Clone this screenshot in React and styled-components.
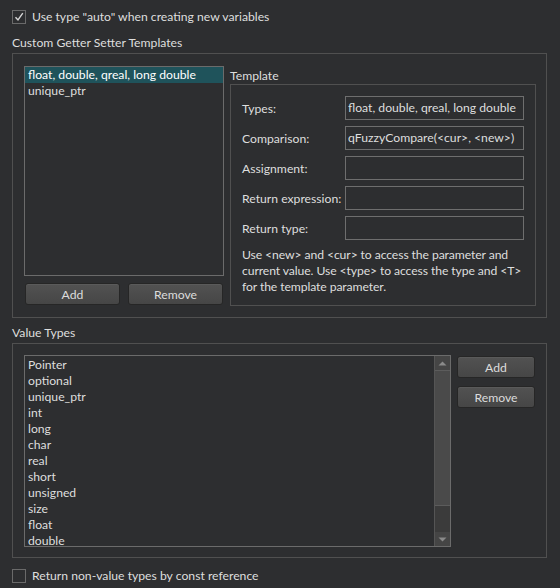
import styled, { createGlobalStyle } from "styled-components";

const GlobalStyle = createGlobalStyle`
  html, body {
    margin: 0;
    padding: 0;
    background: #2d2e30;
  }
  body {
    font-family: "Lato", "Liberation Sans", sans-serif;
    font-size: 12.2px;
    color: #dedede;
  }
`;

const templates = ["float, double, qreal, long double", "unique_ptr"];

const valueTypes = [
  "Pointer",
  "optional",
  "unique_ptr",
  "int",
  "long",
  "char",
  "real",
  "short",
  "unsigned",
  "size",
  "float",
  "double",
];

const fields = [
  { label: "Types:", value: "float, double, qreal, long double" },
  { label: "Comparison:", value: "qFuzzyCompare(<cur>, <new>)" },
  { label: "Assignment:", value: "" },
  { label: "Return expression:", value: "" },
  { label: "Return type:", value: "" },
];

const helpLines = [
  "Use <new> and <cur> to access the parameter and",
  "current value. Use <type> to access the type and <T>",
  "for the template parameter.",
];

const CheckMark = () => (
  <svg width="12" height="12" viewBox="0 0 12 12">
    <path d="M2.5 6.2 L5 9 L9.8 2.2" fill="none" stroke="#d6d6d6" strokeWidth="1.4" />
  </svg>
);

const CheckBox = ({ checked, children }) => (
  <CheckRow>
    <Box>{checked && <CheckMark />}</Box>
    <span>{children}</span>
  </CheckRow>
);

const Arrow = ({ up }) => (
  <svg width="9" height="5" viewBox="0 0 9 5">
    <path d={up ? "M0.5 4.5 L4.5 0.5 L8.5 4.5 Z" : "M0.5 0.5 L4.5 4.5 L8.5 0.5 Z"} fill="#8a8a8a" />
  </svg>
);

const App = () => {
  return (
    <Page>
      <GlobalStyle />
      <CheckBox checked>Use type "auto" when creating new variables</CheckBox>

      <SectionTitle>Custom Getter Setter Templates</SectionTitle>
      <GroupBox $padding="12px 10px 11px 11px">
        <LeftColumn>
          <TemplateList>
            {templates.map((t, i) => (
              <Item key={t} $selected={i === 0}>
                {t}
              </Item>
            ))}
          </TemplateList>
          <ButtonRow>
            <Button>Add</Button>
            <Button>Remove</Button>
          </ButtonRow>
        </LeftColumn>

        <RightColumn>
          <InnerTitle>Template</InnerTitle>
          <TemplateBox>
            {fields.map(f => (
              <FieldRow key={f.label}>
                <FieldLabel>{f.label}</FieldLabel>
                <Input>{f.value}</Input>
              </FieldRow>
            ))}
            <Help>
              {helpLines.map(line => (
                <div key={line}>{line}</div>
              ))}
            </Help>
          </TemplateBox>
        </RightColumn>
      </GroupBox>

      <SectionTitle $top={7}>Value Types</SectionTitle>
      <GroupBox $padding="11px 11px 11px 11px" $height={215}>
        <ValueList>
          <Items>
            {valueTypes.map(v => (
              <Item key={v}>{v}</Item>
            ))}
          </Items>
          <ScrollBar>
            <ScrollButton>
              <Arrow up />
            </ScrollButton>
            <Thumb />
            <Track />
            <ScrollButton>
              <Arrow />
            </ScrollButton>
          </ScrollBar>
        </ValueList>
        <SideButtons>
          <Button $width={78}>Add</Button>
          <Button $width={78}>Remove</Button>
        </SideButtons>
      </GroupBox>

      <BottomCheck>
        <CheckBox>Return non-value types by const reference</CheckBox>
      </BottomCheck>
    </Page>
  );
};

export default App;

/* ---------------------------- Styled Components --------------------------- */

const Page = styled.div`
  width: 560px;
  height: 588px;
  box-sizing: border-box;
  padding: 10px 13px 0 12px;
  display: flex;
  flex-direction: column;
`;

const CheckRow = styled.label`
  display: flex;
  align-items: center;
  gap: 6px;
  height: 14px;
  line-height: 14px;
`;

const Box = styled.span`
  width: 12px;
  height: 12px;
  border: 1px solid #6a6a6a;
  display: grid;
  place-items: center;
  flex-shrink: 0;
`;

const SectionTitle = styled.div`
  margin-top: ${props => props.$top ?? 11}px;
  height: 16px;
  line-height: 16px;
  margin-bottom: 2px;
`;

const GroupBox = styled.section`
  border: 1px solid #505050;
  box-sizing: border-box;
  height: ${props => props.$height ?? 265}px;
  padding: ${props => props.$padding};
  display: flex;
  gap: 6px;
`;

const LeftColumn = styled.div`
  width: 200px;
  display: flex;
  flex-direction: column;
`;

const ListFrame = styled.div`
  border: 1px solid #6b6b6b;
  box-sizing: border-box;
  overflow: hidden;
`;

const TemplateList = styled(ListFrame)`
  height: 210px;
`;

const Item = styled.div`
  height: 16px;
  line-height: 16px;
  padding-left: 3px;
  white-space: nowrap;
  color: ${props => (props.$selected ? "#ffffff" : "#dedede")};
  background: ${props => (props.$selected ? "#1f535b" : "transparent")};
`;

const ButtonRow = styled.div`
  display: flex;
  gap: 8px;
  margin-top: 7px;
  padding: 0 1px;
`;

const Button = styled.button`
  width: ${props => (props.$width ? `${props.$width}px` : "95px")};
  height: 22px;
  box-sizing: border-box;
  border: 1px solid #262626;
  border-radius: 3px;
  background: linear-gradient(#525252, #464646);
  box-shadow: inset 0 1px 0 #5a5a5a;
  color: #dcdcdc;
  font-family: inherit;
  font-size: 12.2px;
  padding: 0;
`;

const RightColumn = styled.div`
  flex: 1;
  min-width: 0;
  display: flex;
  flex-direction: column;
`;

const InnerTitle = styled.div`
  height: 16px;
  line-height: 16px;
  margin-top: 2px;
  margin-bottom: 0;
`;

const TemplateBox = styled.div`
  border: 1px solid #505050;
  box-sizing: border-box;
  height: 222px;
  min-width: 0;
  padding: 11px 11px 0 11px;
  display: flex;
  flex-direction: column;
  gap: 6px;
`;

const FieldRow = styled.div`
  display: flex;
  align-items: center;
  height: 24px;
`;

const FieldLabel = styled.div`
  width: 103px;
  flex-shrink: 0;
  white-space: nowrap;
`;

const Input = styled.div`
  flex: 1;
  height: 24px;
  box-sizing: border-box;
  border: 1px solid #6e6e6e;
  padding: 0 2px;
  line-height: 22px;
  white-space: nowrap;
  overflow: hidden;
`;

const Help = styled.div`
  margin-top: 1px;
  line-height: 16px;
  white-space: nowrap;
  letter-spacing: -0.1px;
`;

const ValueList = styled(ListFrame)`
  width: 428px;
  height: 192px;
  display: flex;
`;

const Items = styled.div`
  flex: 1;
  padding-top: 1px;
  overflow: hidden;
`;

const ScrollBar = styled.div`
  width: 15px;
  display: flex;
  flex-direction: column;
  background: #3b3b3b;
  border-left: 1px solid #555;
`;

const ScrollButton = styled.div`
  height: 14px;
  display: grid;
  place-items: center;
  background: #454545;
`;

const Thumb = styled.div`
  height: 136px;
  background: #4a4a4a;
  border: 1px solid #5c5c5c;
  border-right: none;
  border-left: none;
  box-sizing: border-box;
`;

const Track = styled.div`
  flex: 1;
  background: #3b3b3b;
`;

const SideButtons = styled.div`
  display: flex;
  flex-direction: column;
  gap: 8px;
  padding-top: 1px;
`;

const BottomCheck = styled.div`
  margin-top: 11px;
`;
